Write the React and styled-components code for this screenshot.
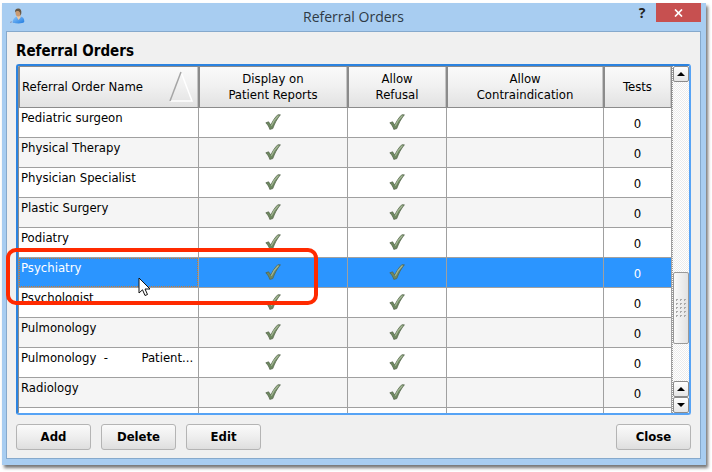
import React, { useState } from "react";
import styled, { createGlobalStyle } from "styled-components";

const GlobalStyle = createGlobalStyle`
  * { box-sizing: border-box; }
  html, body { margin: 0; background: #fff; }
  body, button { font-family: "DejaVu Sans Condensed", "Noto Sans", sans-serif; font-size: 13px; line-height: 16px; color: #000; }
  button { padding: 0; cursor: default; }
`;

const Page = styled.div`
  height: 100vh;
  min-height: 320px;
  padding: 3px 6px 7px 2px;
  display: flex;
`;

const Window = styled.section`
  position: relative;
  flex: 1;
  min-width: 0;
  display: flex;
  flex-direction: column;
  padding: 0 5px 6px 4px;
  background: #a8cdf1;
  box-shadow: 2px 3px 3px 0 #777;
`;

const TitleBar = styled.header`
  height: 28px;
  flex: none;
  display: grid;
  grid-template-columns: 74px 1fr 74px;
  align-items: start;
`;

const AppIcon = styled.svg`
  margin: 5px 0 0 4px;
  width: 16px;
  height: 16px;
`;

const Title = styled.h1`
  margin: 0;
  padding-top: 4px;
  font: 400 14px/20px "Open Sans", sans-serif;
  text-align: center;
  color: #2f3a45;
`;

const WindowControls = styled.div`
  display: flex;
  justify-content: flex-end;
`;

const HelpButton = styled.button`
  width: 28px;
  height: 19px;
  border: 0;
  background: none;
  font: 700 14px/19px "Open Sans", sans-serif;
  color: #222;
`;

const CloseWindow = styled.button`
  flex: none;
  width: 45px;
  height: 19px;
  border: 0;
  background: #c75050;
  display: flex;
  align-items: center;
  justify-content: center;
`;

const Content = styled.main`
  flex: 1;
  min-height: 0;
  display: flex;
  flex-direction: column;
  padding: 9px 9px 8px;
  border: 1px solid #86a9cc;
  background: #f0f0f0;
`;

const Heading = styled.h2`
  margin: 0 0 3px;
  font-size: 15px;
  line-height: 20px;
  font-weight: 700;
`;

const GridFrame = styled.div`
  flex: 1;
  min-height: 0;
  display: flex;
  overflow: hidden;
  border: 2px solid #56a3f5;
  border-top-color: #2b83e0;
  border-left-color: #2b83e0;
  border-radius: 3px;
  background: #fff;
`;

const TableView = styled.div`
  flex: 1;
  min-width: 0;
  overflow: hidden;
`;

const Table = styled.table`
  width: 100%;
  table-layout: fixed;
  border-collapse: separate;
  border-spacing: 0;
  border-left: 1px solid #8b8b8b;
`;

const Column = styled.col`
  width: ${(p) => p.$width};
`;

const HeadCell = styled.th`
  height: 42px;
  padding: ${(p) => (p.$sorted ? "0 5px 0 3px" : "0 4px")};
  border: solid #8b8b8b;
  border-width: 1px 1px 1px 0;
  box-shadow: inset -1px 0 #c4c4c4, inset 1px 0 #8b8b8b;
  background: linear-gradient(#fafafa, #f0f0f0 50%, #e2e2e2);
  font-weight: 400;
  white-space: pre-line;
`;

const SortButton = styled.button`
  width: 100%;
  height: 36px;
  border: 0;
  background: none;
  display: flex;
  align-items: center;
  justify-content: space-between;
`;

const Row = styled.tr`
  background: ${(p) => (p.$selected ? "#2b95ff" : "#fff")};
  color: ${(p) => (p.$selected ? "#fff" : "#000")};
  &:nth-child(even) { background: ${(p) => (p.$selected ? "#2b95ff" : "#f5f5f5")}; }
`;

const Cell = styled.td`
  height: 30px;
  padding: 0;
  border: solid #a0a0a0;
  border-width: 0 1px 1px 0;
  text-align: center;
  vertical-align: middle;
`;

const NameCell = styled(Cell)`
  text-align: left;
  vertical-align: top;
`;

const NameText = styled.div`
  height: 29px;
  padding: 1px 2px 0 1px;
  border: 1px dotted ${(p) => (p.$selected ? "#c87a32" : "transparent")};
  white-space: pre;
  overflow: hidden;
  text-overflow: ellipsis;
`;

const CheckCell = styled(Cell)`
  padding-bottom: 1px;
`;

const CountCell = styled(Cell)`
  padding-top: 3px;
`;

const Check = styled.svg`
  display: block;
  width: 16px;
  height: 16px;
  margin: 0 auto;
`;

const ScrollTrack = styled.div`
  flex: none;
  width: 17px;
  display: flex;
  flex-direction: column;
  border-left: 1px dotted #999;
  background: repeating-conic-gradient(#ebebeb 0 25%, #fff 0 50%) 0 0 / 2px 2px;
`;

const ScrollButton = styled.button`
  flex: none;
  height: 16px;
  border: 1px solid #8b8b8b;
  border-radius: 2px;
  background: linear-gradient(#fff, #e6e6e6);
  display: flex;
  align-items: center;
  justify-content: center;
`;

const TrackSpace = styled.div`
  flex: ${(p) => p.$grow} 1 0;
`;

const Thumb = styled.div`
  flex: none;
  height: 72px;
  border: 1px solid #999;
  border-radius: 2px;
  background: linear-gradient(90deg, #fafafa, #e2e2e2);
  display: flex;
  align-items: center;
  justify-content: center;
`;

const Actions = styled.footer`
  flex: none;
  display: flex;
  gap: 10px;
  margin-top: 9px;
`;

const ActionButton = styled.button`
  width: 75px;
  height: 26px;
  margin-left: ${(p) => (p.$end ? "auto" : "0")};
  border: 1px solid #b4b4b4;
  border-radius: 3px;
  background: linear-gradient(#fafafa, #eee 50%, #dedede);
  font-weight: 700;
`;

const Callout = styled.div`
  position: absolute;
  left: 4px;
  top: 245px;
  width: 312px;
  height: 57px;
  border: 4px solid #ff2a00;
  border-radius: 10px;
  pointer-events: none;
`;

const Pointer = styled.svg`
  position: absolute;
  left: 136px;
  top: 274px;
  width: 13px;
  height: 20px;
  pointer-events: none;
`;

const ORDERS = [
  "Pediatric surgeon",
  "Physical Therapy",
  "Physician Specialist",
  "Plastic Surgery",
  "Podiatry",
  "Psychiatry",
  "Psychologist",
  "Pulmonology",
  "Pulmonology  -         Patient...",
  "Radiology",
  "",
];

const PersonIcon = () => (
  <AppIcon viewBox="0 0 16 16" aria-hidden="true">
    <defs>
      <linearGradient id="coat" x2="1" y2="1">
        <stop offset="0" stopColor="#8cc5fb" />
        <stop offset="1" stopColor="#1f7be0" />
      </linearGradient>
    </defs>
    <path d="M0 14.4l2-.6M3 14.6l1-.5" stroke="#8e96b5" />
    <path d="M2.500 14.500C3 10.500 5 9 7.500 8.500h3c3 .5 4 3 3.700 5.500-1.700 1.700-7.200 2-11.700.5z" fill="url(#coat)" />
    <path d="M7 7.500h3.500v2L8.500 12 6.800 9z" fill="#e9c9a9" />
    <ellipse cx="8.300" cy="4.700" rx="2.800" ry="3.700" fill="#c99a72" />
    <path d="M5 4.500C4.600 1.500 6.300.3 8.300.4c2.200 0 3.500 1.600 3 5-.2 1-.6 1.500-1 2 .1-2-.3-3.600-1.500-4.200C7.500 3 6 3 5 4.500z" fill="#665744" />
  </AppIcon>
);

const CheckMark = () => (
  <Check viewBox="0 0 16 16" role="img" aria-label="Yes">
    <path d="M.8 8.800l2.800-1 2.200 3.300C7.500 7.300 9.800 3.500 12.800.8h2.600C12 4.800 9.500 9.800 7.800 14.600l-3 .8C4 12.800 2.600 10.500.8 8.800z" fill="#6e8860" stroke="#53634a" strokeWidth="0.700" />
    <path d="M6.300 11.800c1.700-4 4.200-7.500 7.200-10.300" fill="none" stroke="#a4b795" strokeWidth="1.200" />
  </Check>
);

const Arrow = ({ down }) => (
  <svg width="8" height="4" viewBox="0 0 8 4" aria-hidden="true">
    <path d={down ? "M0 0h8L4 4z" : "M0 4h8L4 0z"} />
  </svg>
);

const Grip = () => (
  <svg width="11" height="19" viewBox="0 0 11 19" aria-hidden="true">
    {[0, 4, 8, 12, 16].map((y) =>
      [0, 4, 8].map((x) => (
        <path key={`${x}-${y}`} d={`M${x} ${y}h2v1h-1v1h-1z`} fill="#aaa" />
      ))
    )}
  </svg>
);

export default function App() {
  const [selected, setSelected] = useState("Psychiatry");
  return (
    <Page>
      <GlobalStyle />
      <Window>
        <TitleBar>
          <PersonIcon />
          <Title>Referral Orders</Title>
          <WindowControls>
            <HelpButton aria-label="Help">?</HelpButton>
            <CloseWindow aria-label="Close window">
              <svg width="9" height="8" viewBox="0 0 9 8" aria-hidden="true">
                <path d="M1 .5l7 7M8 .5l-7 7" stroke="#fff" strokeWidth="1.700" />
              </svg>
            </CloseWindow>
          </WindowControls>
        </TitleBar>
        <Content>
          <Heading>Referral Orders</Heading>
          <GridFrame>
            <TableView>
              <Table>
                <colgroup>
                  <Column $width="auto" />
                  <Column $width="149px" />
                  <Column $width="99px" />
                  <Column $width="157px" />
                  <Column $width="68px" />
                </colgroup>
                <thead>
                  <tr>
                    <HeadCell $sorted aria-sort="ascending">
                      <SortButton>
                        Referral Order Name
                        <svg width="24" height="32" viewBox="0 0 24 32" aria-hidden="true">
                          <path d="M12 1l11 29H1" fill="none" stroke="#fff" strokeWidth="1.500" />
                          <path d="M1 30L12 1" stroke="#a5a5a5" strokeWidth="1.500" />
                        </svg>
                      </SortButton>
                    </HeadCell>
                    <HeadCell>{"Display on\nPatient Reports"}</HeadCell>
                    <HeadCell>{"Allow\nRefusal"}</HeadCell>
                    <HeadCell>{"Allow\nContraindication"}</HeadCell>
                    <HeadCell>Tests</HeadCell>
                  </tr>
                </thead>
                <tbody>
                  {ORDERS.map((name) => (
                    <Row key={name} $selected={name === selected} onClick={() => name && setSelected(name)}>
                      <NameCell>
                        <NameText $selected={name === selected}>{name}</NameText>
                      </NameCell>
                      <CheckCell>{name && <CheckMark />}</CheckCell>
                      <CheckCell>{name && <CheckMark />}</CheckCell>
                      <Cell />
                      <CountCell>{name && "0"}</CountCell>
                    </Row>
                  ))}
                </tbody>
              </Table>
            </TableView>
            <ScrollTrack>
              <ScrollButton aria-label="Scroll up"><Arrow /></ScrollButton>
              <TrackSpace $grow={190} />
              <Thumb><Grip /></Thumb>
              <TrackSpace $grow={37} />
              <ScrollButton aria-label="Page up"><Arrow /></ScrollButton>
              <ScrollButton aria-label="Scroll down"><Arrow down /></ScrollButton>
            </ScrollTrack>
          </GridFrame>
          <Actions>
            <ActionButton>Add</ActionButton>
            <ActionButton>Delete</ActionButton>
            <ActionButton>Edit</ActionButton>
            <ActionButton $end>Close</ActionButton>
          </Actions>
        </Content>
        <Callout />
        <Pointer viewBox="0 0 13 20" aria-hidden="true">
          <path d="M1 1v15l3.500-3.200L7 18.500l2.500-1L7 12h5z" fill="#fff" stroke="#111" />
        </Pointer>
      </Window>
    </Page>
  );
}
